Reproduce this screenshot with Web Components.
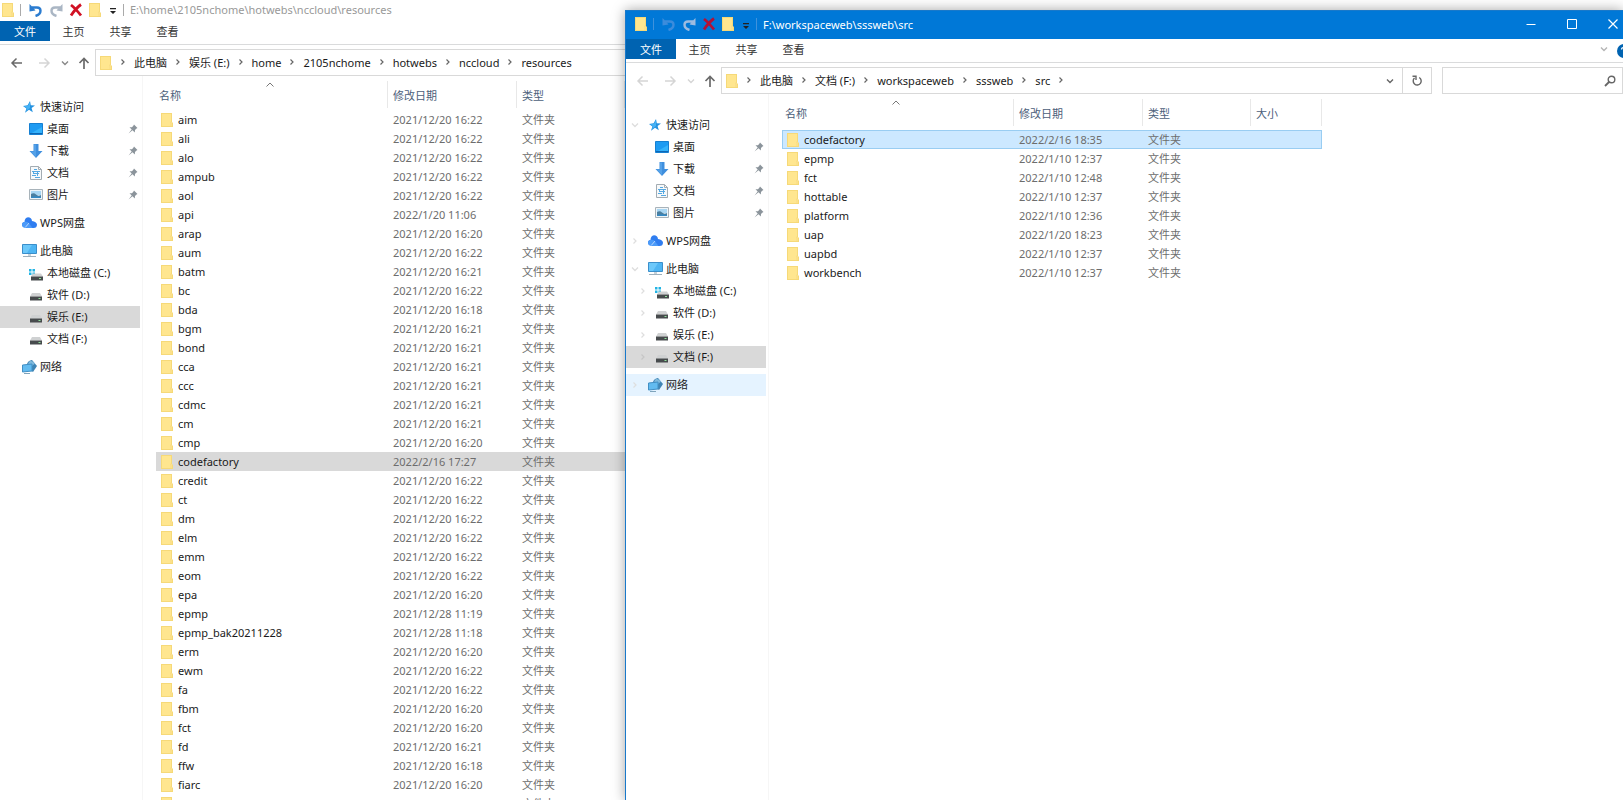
<!DOCTYPE html>
<html lang="zh-CN">
<head>
<meta charset="utf-8">
<title>File Explorer</title>
<style>
  html, body { margin: 0; height: 100%; }
  body {
    position: relative; overflow: hidden; background: #fff; color: #1a1a1a;
    font: 11px/19px "Noto Sans", "Noto Sans CJK SC", sans-serif;
  }
  explorer-window { position: absolute; inset: 0; }
  explorer-window[active] { top: 10px; left: 625px; }
</style>
</head>
<body>
<explorer-window id="back">
  <title-bar slot="title">E:\home\2105nchome\hotwebs\nccloud\resources</title-bar>
  <ribbon-tabs slot="ribbon"></ribbon-tabs>
  <address-bar slot="address" history path="此电脑|娱乐 (E:)|home|2105nchome|hotwebs|nccloud|resources"></address-bar>
  <nav-pane slot="nav" current="娱乐 (E:)"></nav-pane>
  <file-list id="resources"></file-list>
</explorer-window>
<explorer-window id="front" active>
  <title-bar slot="title" active>F:\workspaceweb\sssweb\src</title-bar>
  <ribbon-tabs slot="ribbon"></ribbon-tabs>
  <address-bar slot="address" trail path="此电脑|文档 (F:)|workspaceweb|sssweb|src"></address-bar>
  <nav-pane slot="nav" current="文档 (F:)" hover="网络" arrows></nav-pane>
  <file-list id="src" active></file-list>
</explorer-window>

<script>
const RESET = `
  *, *::before { box-sizing: border-box; }
  :host { display: block; box-sizing: border-box; }
  :host([hidden]) { display: none; }
  button { font: inherit; color: inherit; background: none; border: 0; padding: 0; margin: 0; display: inline-flex; align-items: center; justify-content: center; }
  a { color: inherit; text-decoration: none; }
`;
class Base extends HTMLElement {
  connectedCallback() {
    if (this.shadowRoot) return;
    this.attachShadow({ mode: 'open' });
    this.render();
  }
  paint(css, html) { this.shadowRoot.innerHTML = `<style>${RESET}${css}</style>${html}`; }
}

const ICONS = {
  folder: [12, 14, `<path d="M0 0H11V9L12 10V14H0Z" fill="#f6d978"/><path d="M1 1H10V8L9 10V13H1Z" fill="#ffe68f"/><path d="M9 10L10 9H11V13H9Z" fill="#fbe08a"/>`],
  undo: [14, 14, `<path d="M3 4.500H8Q11.500 4.500 11.500 7.800Q11.500 11.500 6.500 13" fill="none" stroke="currentColor" stroke-width="2.400"/><path d="M.5 1V8.500L6.500 7.500L4 4.500Z" fill="currentColor"/>`],
  redo: [14, 14, `<path d="M11 4.500H6Q2.500 4.500 2.500 7.800Q2.500 11.500 7.500 13" fill="none" stroke="currentColor" stroke-width="2.400"/><path d="M13.500 1V8.500L7.500 7.500L10 4.500Z" fill="currentColor"/>`],
  remove: [14, 14, `<path d="M2 2Q6 5 12 12.500M12 1.500Q7 5 2 12.500" fill="none" stroke="currentColor" stroke-width="2.800"/>`],
  menu: [8, 8, `<path d="M1 1H7V2.300H1ZM1 4H7L4 7Z" fill="currentColor"/>`],
  back: [14, 12, `<path d="M12 6H2M6.500 1.500L2 6L6.500 10.500" fill="none" stroke="currentColor" stroke-width="1.500"/>`],
  forward: [14, 12, `<path d="M2 6H12M7.500 1.500L12 6L7.500 10.500" fill="none" stroke="currentColor" stroke-width="1.500"/>`],
  up: [12, 12, `<path d="M6 12V2M1.500 6L6 1.500L10.500 6" fill="none" stroke="currentColor" stroke-width="1.700"/>`],
  down: [8, 6, `<path d="M1 1.500L4 4.500L7 1.500" fill="none" stroke="currentColor" stroke-width="1.400"/>`],
  right: [6, 8, `<path d="M1.500 1.500L4 4L1.500 6.500" fill="none" stroke="currentColor" stroke-width="1.200"/>`],
  sort: [8, 5, `<path d="M.5 4.500L4 1L7.500 4.500" fill="none" stroke="currentColor"/>`],
  refresh: [12, 12, `<path d="M8.200 2.500A4 4 0 1 1 3.500 3M1.500 1.200H5V5" fill="none" stroke="currentColor" stroke-width="1.400"/>`],
  search: [12, 12, `<circle cx="7.500" cy="4.500" r="3.300" fill="none" stroke="currentColor" stroke-width="1.400"/><path d="M5 7L1 11" stroke="currentColor" stroke-width="1.800"/>`],
  minimize: [10, 10, `<path d="M.5 5.500H9.500" stroke="currentColor"/>`],
  maximize: [10, 10, `<path d="M.5 .5H9.500V9.500H.5Z" fill="none" stroke="currentColor"/>`],
  close: [10, 10, `<path d="M.5 .5L9.500 9.500M9.500 .5L.5 9.500" stroke="currentColor" stroke-width="1.200"/>`],
  help: [14, 14, `<circle cx="7" cy="7" r="7" fill="#0063b1"/><path d="M4.500 5.500Q4.500 3.500 7 3.500T9.500 5.500Q9.500 6.500 7 8V9M7 10V11.500" fill="none" stroke="#fff" stroke-width="1.300"/>`],
  pin: [10, 10, `<path d="M6 .5L9.500 4L8.500 4.500L7 6L6.800 8.500L4.500 6.300L.5 9.500L3.700 5.500L1.500 3.300L4 3.200L5.500 1.500Z" fill="#8b949b"/>`],
  star: [12, 12, `<path d="M7 0L7.800 4.200L12 4.600L8.600 7L9.800 11.300L6 8.800L2 11.800L3.400 7.500L0 5L4.600 4.300Z" fill="#2492e0"/><path d="M7 1L7 7L3 10L4 7.200L1 5.200L5 4.800Z" fill="#45b2f5"/>`],
  desktop: [14, 12, `<path d="M.5 .5H13.500V11.500H.5Z" fill="#1e9bf2" stroke="#1680d2"/><path d="M1 11L13 4V10Z" fill="#35b3fb"/><path d="M1 10.500H13" stroke="#0d67b5"/>`],
  download: [14, 14, `<path d="M4.500 0H9.500V7H13.500L7 14L.5 7H4.500Z" fill="#3f8fde"/><path d="M5 .5H7V13L1.500 7.500H5Z" fill="#54a1e8"/>`],
  document: [12, 14, `<path d="M.5 .5H8.500L11.500 3.500V13.500H.5Z" fill="#f7f9fa" stroke="#a3acb3"/><path d="M8.500 .5V3.500H11.500" fill="none" stroke="#a3acb3"/><path d="M4 3.500H7M2 5.500H10M3 7.500H9M2 9.500H6M5 11.500H10M7.500 5V10M3.500 5V8" stroke="#55a8e2"/>`],
  picture: [14, 11, `<path d="M.5 .5H13.500V10.500H.5Z" fill="#eef4f8" stroke="#a8b3ba"/><path d="M2 2H12V6H2Z" fill="#a8d6f3"/><path d="M2 5Q5 3.500 7 5.500T12 6V9H2Z" fill="#4c7f9f"/><path d="M2 8Q7 6.500 12 8V9H2Z" fill="#3389c4"/>`],
  cloud: [15, 11, `<path d="M3 10Q0 10 0 7.500Q0 5 2.500 5Q2.500 1 6 .3Q9.500 .3 10 4Q14.500 4.500 15 7.500Q15 11 11.500 11H8L4 7L7 4.500L12 10" fill="#2f7df0"/><path d="M2.500 5Q5.500 4 7.500 7L10.500 11H3Q0 10.500 0 7.500Q.3 5.200 2.500 5Z" fill="#4b9af8"/><path d="M3.200 10.500L7 6" stroke="#cfe3ff" stroke-width=".8"/>`],
  pc: [15, 14, `<path d="M.5 .5H14.500V9.500H.5Z" fill="#4eb5f3" stroke="#3b8fcb"/><path d="M1 1H10L5 9H1Z" fill="#6cc8fa"/><path d="M6 10H9V12H6Z" fill="#c8d2d9"/><path d="M1 12.500H14" stroke="#9fb0bc"/>`],
  disk: [12, 8, `<path d="M2 0H10L12 3.500H0Z" fill="#cfd1d2"/><path d="M0 3.500H12V7.500H0Z" fill="#474b4d"/><path d="M8.500 5H10.500V6H8.500Z" fill="#8fe09a"/>`],
  sysdisk: [14, 12, `<path d="M0 0H2.500V2.500H0ZM3.500 0H6V2.500H3.500ZM0 3.500H2.500V6H0ZM3.500 3.500H6V6H3.500Z" fill="#22b4e4"/><path d="M4 4.500H12L14 7.500H2Z" fill="#cfd1d2"/><path d="M2 7.500H14V11.500H2Z" fill="#474b4d"/><path d="M10 9H12V10H10Z" fill="#8fe09a"/>`],
  network: [15, 14, `<path d="M5 4Q6 .5 10 0L15 6L11 12L8 10Z" fill="#3f84b4"/><path d="M8 .8Q11 1 13 3.500L10 6L6 3.500Z" fill="#7fb9dc"/><path d="M.5 5L10 4V11L.5 12Z" fill="#62bbf0" stroke="#418fc4"/><path d="M2 13.500H8" stroke="#7fa4bc"/>`],
};
customElements.define('x-icon', class extends Base {
  render() {
    const [w, h, body] = ICONS[this.getAttribute('name')];
    this.paint(`:host{display:inline-flex;flex:none} svg{display:block}`,
      `<svg width="${w}" height="${h}" viewBox="0 0 ${w} ${h}" aria-hidden="true">${body}</svg>`);
  }
});

customElements.define('explorer-window', class extends Base {
  render() {
    this.paint(`
      :host { display: flex; flex-direction: column; background: #fff; --title-height: 21px; --title-inset: 0px; --list-lead: 2px; }
      :host([active]) { --title-height: 28px; --title-inset: 7px; --list-lead: 4px; border-left: 1px solid #1979ca; border-top: 1px solid #1979ca; box-shadow: 0 0 12px rgba(0,0,0,.36); }
      main { display: flex; flex: 1; min-height: 0; overflow: hidden; }
      ::slotted(file-list) { flex: 1; min-width: 0; }
    `, `<slot name="title"></slot><slot name="ribbon"></slot><slot name="address"></slot><main><slot name="nav"></slot><slot></slot></main>`);
  }
});

customElements.define('title-bar', class extends Base {
  render() {
    const active = this.hasAttribute('active');
    this.paint(`
      :host { display: flex; align-items: center; height: var(--title-height); padding: 0 0 2px calc(var(--title-inset) + 2px); color: #999; background: #fff; flex: none; overflow: hidden; }
      :host([active]) { background: #0078d7; color: #fff; }
      .tools { display: flex; align-items: center; gap: 6px; margin-right: 6px; }
      .bar { width: 1px; height: 12px; background: #aaa; }
      :host([active]) .bar { background: #3f92dc; }
      .undo { color: #2b7cd0; margin-left: 2px; } .redo { color: #aab6c4; } .remove { color: #d11124; } .menu { color: #222; }
      :host([active]) .undo { color: #3c8cdc; } :host([active]) .redo { color: #9dbbe0; } :host([active]) .remove { color: #b01238; }
      .menu { margin: 3px 0 0 2px; }
      .title { flex: 1; white-space: nowrap; }
      .controls { display: flex; }
      .controls button { width: 41px; height: 26px; }
      .controls button:last-child { margin-right: -10px; }
    `, `<div class="tools"><x-icon name="folder"></x-icon><span class="bar"></span>
      <button class="undo" aria-label="撤消"><x-icon name="undo"></x-icon></button>
      <button class="redo" aria-label="恢复"><x-icon name="redo"></x-icon></button>
      <button class="remove" aria-label="删除"><x-icon name="remove"></x-icon></button>
      <button aria-label="新建文件夹"><x-icon name="folder"></x-icon></button>
      <button class="menu" aria-label="自定义"><x-icon name="menu"></x-icon></button><span class="bar"></span></div>
      <span class="title"><slot></slot></span>
      ${active ? `<div class="controls">${['minimize', 'maximize', 'close'].map(n => `<button aria-label="${n}"><x-icon name="${n}"></x-icon></button>`).join('')}</div>` : ''}`);
  }
});

customElements.define('ribbon-tabs', class extends Base {
  render() {
    this.paint(`
      :host { display: flex; height: 24px; border-bottom: 1px solid #dadbdc; color: #333; flex: none; overflow: hidden; }
      button { width: 47px; height: 20px; }
      .file { width: 50px; background: #0063b1; color: #fff; }
      .spacer { flex: 1; }
      .fold { width: 12px; color: #b5b5b5; margin-right: 7px; }
      .help { width: 14px; margin: 2px -8px 0 0; }
    `, `<button class="file">文件</button><button>主页</button><button>共享</button><button>查看</button><span class="spacer"></span>
      <button class="fold" aria-label="展开功能区"><x-icon name="down"></x-icon></button><button class="help" aria-label="帮助"><x-icon name="help"></x-icon></button>`);
  }
});

customElements.define('address-bar', class extends Base {
  render() {
    const parts = this.getAttribute('path').split('|');
    const sep = '<span class="sep"><x-icon name="right"></x-icon></span>';
    this.paint(`
      :host { display: flex; padding-top: 4px; height: 31px; flex: none; }
      .history { display: flex; align-items: center; width: 95px; height: 27px; padding-left: 10px; color: #d5d5d5; }
      .fwd { margin-left: 13px; } .recent { margin-left: 10px; } .up { margin-left: 9px; color: #6a6a6a; }
      :host([history]) .back { color: #6a6a6a; } :host([history]) .recent { color: #888; }
      .box { flex: 1; display: flex; align-items: center; height: 27px; border: 1px solid #d9d9d9; padding-left: 4px; white-space: nowrap; color: #1a1a1a; }
      nav { flex: 1; display: flex; align-items: center; padding-bottom: 1px; }
      .sep { width: 22px; display: inline-flex; justify-content: center; color: #666; }
      .drop { width: 24px; color: #666; }
      .refresh { width: 29px; height: 25px; border-left: 1px solid #d9d9d9; color: #666; }
      .search { display: flex; align-items: center; width: 181px; height: 27px; margin-left: 10px; border: 1px solid #d9d9d9; color: #666; padding-right: 6px; }
      input { flex: 1; min-width: 0; border: 0; outline: 0; background: none; font: inherit; padding: 0 6px; }
    `, `<div class="history"><button class="back" aria-label="后退"><x-icon name="back"></x-icon></button><button class="fwd" aria-label="前进"><x-icon name="forward"></x-icon></button>
      <button class="recent" aria-label="最近位置"><x-icon name="down"></x-icon></button><button class="up" aria-label="上移"><x-icon name="up"></x-icon></button></div>
      <div class="box"><x-icon name="folder"></x-icon><nav>${parts.map(p => `${sep}<a href="#">${p}</a>`).join('')}${this.hasAttribute('trail') ? sep : ''}</nav>
      <button class="drop" aria-label="以前的位置"><x-icon name="down"></x-icon></button><button class="refresh" aria-label="刷新"><x-icon name="refresh"></x-icon></button></div>
      <label class="search"><input type="search" aria-label="搜索"><x-icon name="search"></x-icon></label>`);
  }
});

const PLACES = [
  [['star', '快速访问', 'down'], ['desktop', '桌面'], ['download', '下载'], ['document', '文档'], ['picture', '图片']],
  [['cloud', 'WPS网盘', 'right']],
  [['pc', '此电脑', 'down'], ['sysdisk', '本地磁盘 (C:)', 'right'], ['disk', '软件 (D:)', 'right'], ['disk', '娱乐 (E:)', 'right'], ['disk', '文档 (F:)', 'right']],
  [['network', '网络', 'right']],
];
customElements.define('nav-pane', class extends Base {
  render() {
    const current = this.getAttribute('current'), hover = this.getAttribute('hover'), arrows = this.hasAttribute('arrows');
    const row = ([icon, text, arrow], i, group) => {
      const pinned = i && group[0][0] === 'star';
      const cls = [i ? 'child' : '', text === current ? 'current' : '', text === hover ? 'hover' : ''].join(' ');
      return `<li><a href="#" class="${cls}"><span class="arrow">${arrows && arrow ? `<x-icon name="${arrow}"></x-icon>` : ''}</span>
        <span class="icon ${icon}"><x-icon name="${icon}"></x-icon></span><span class="text">${text}</span>${pinned ? '<x-icon name="pin"></x-icon>' : ''}</a></li>`;
    };
    this.paint(`
      :host { width: 143px; border-right: 1px solid #f6f6f6; padding-top: 20px; flex: none; }
      ul { list-style: none; margin: 0 0 6px; padding: 0; }
      a { display: flex; align-items: center; width: 140px; height: 22px; padding: 0 2px 1px 0; white-space: nowrap; color: #1a1a1a; }
      .arrow { width: 18px; display: flex; justify-content: center; color: #dedede; }
      .child .arrow { width: 25px; padding-left: 8px; }
      .icon { width: 22px; display: flex; justify-content: center; }
      .child .icon { padding-right: 1px; }
      .disk, .sysdisk { padding-top: 5px; }
      .text { flex: 1; }
      .current { background: #d9d9d9; } .current .arrow { color: #c6c6c6; } .hover { background: #e5f3ff; }
    `, PLACES.map(g => `<ul>${g.map(row).join('')}</ul>`).join(''));
  }
});

customElements.define('file-list', class extends Base {
  set items(v) { this._items = v; if (this.shadowRoot) this.render(); }
  render() {
    const rows = (this._items || []).map(([name, date, selected]) => `<tr${selected ? ' class="selected"' : ''}>
      <td class="name"><span><x-icon name="folder"></x-icon>${name}</span></td><td>${date}</td><td>文件夹</td><td></td></tr>`).join('');
    this.paint(`
      :host { padding-left: 13px; overflow: hidden; }
      table { table-layout: fixed; width: 540px; border-collapse: separate; border-spacing: 0; }
      th { height: 27px; padding: 2px 0 0 5px; text-align: left; font-weight: 400; color: #4c607a; position: relative; border-right: 1px solid #e8e8e8; }
      th:first-child { padding-left: 3px; }
      th x-icon { position: absolute; top: 1px; left: 50%; margin-left: -6px; color: #777; }
      thead::before { content: ""; display: table-row; height: 5px; }
      td { height: 19px; padding: 0 0 0 5px; color: #6d6d6d; white-space: nowrap; line-height: 17px; border: 0 solid transparent; border-width: 1px 0; }
      .name { color: #1a1a1a; }
      .name span { display: flex; align-items: center; gap: 5px; }
      .selected td { background: #d9d9d9; }
      :host([active]) .selected td { background: #cce8ff; border-color: #99cdf2; }
      :host([active]) .selected td:first-child { border-left: 1px solid #99cdf2; padding-left: 4px; }
      :host([active]) .selected td:last-child { border-right: 1px solid #99cdf2; }
      .lead td { height: var(--list-lead); line-height: 0; border: 0; padding: 0; }
    `, `<table><colgroup><col style="width:232px"><col style="width:129px"><col style="width:108px"><col></colgroup>
      <thead><tr><th>名称<x-icon name="sort"></x-icon></th><th>修改日期</th><th>类型</th><th>大小</th></tr></thead>
      <tbody><tr class="lead"><td colspan="4"></td></tr>${rows}</tbody></table>`);
  }
});

const stamp = (names, date) => names.split(' ').map(n => [n, date]);
document.getElementById('resources').items = [
  ...stamp('aim ali alo ampub aol', '2021/12/20 16:22'),
  ['api', '2022/1/20 11:06'], ['arap', '2021/12/20 16:20'], ['aum', '2021/12/20 16:22'],
  ['batm', '2021/12/20 16:21'], ['bc', '2021/12/20 16:22'], ['bda', '2021/12/20 16:18'],
  ...stamp('bgm bond cca ccc cdmc cm', '2021/12/20 16:21'),
  ['cmp', '2021/12/20 16:20'], ['codefactory', '2022/2/16 17:27', true],
  ...stamp('credit ct dm elm emm eom', '2021/12/20 16:22'),
  ['epa', '2021/12/20 16:20'], ['epmp', '2021/12/28 11:19'], ['epmp_bak20211228', '2021/12/28 11:18'],
  ['erm', '2021/12/20 16:20'], ['ewm', '2021/12/20 16:22'], ['fa', '2021/12/20 16:22'],
  ['fbm', '2021/12/20 16:20'], ['fct', '2021/12/20 16:20'], ['fd', '2021/12/20 16:21'],
  ['ffw', '2021/12/20 16:18'], ['fiarc', '2021/12/20 16:20'], ['fidot', '2021/12/20 16:20'],
];
document.getElementById('src').items = [
  ['codefactory', '2022/2/16 18:35', true], ['epmp', '2022/1/10 12:37'], ['fct', '2022/1/10 12:48'],
  ['hottable', '2022/1/10 12:37'], ['platform', '2022/1/10 12:36'], ['uap', '2022/1/20 18:23'],
  ['uapbd', '2022/1/10 12:37'], ['workbench', '2022/1/10 12:37'],
];
</script>
</body>
</html>
